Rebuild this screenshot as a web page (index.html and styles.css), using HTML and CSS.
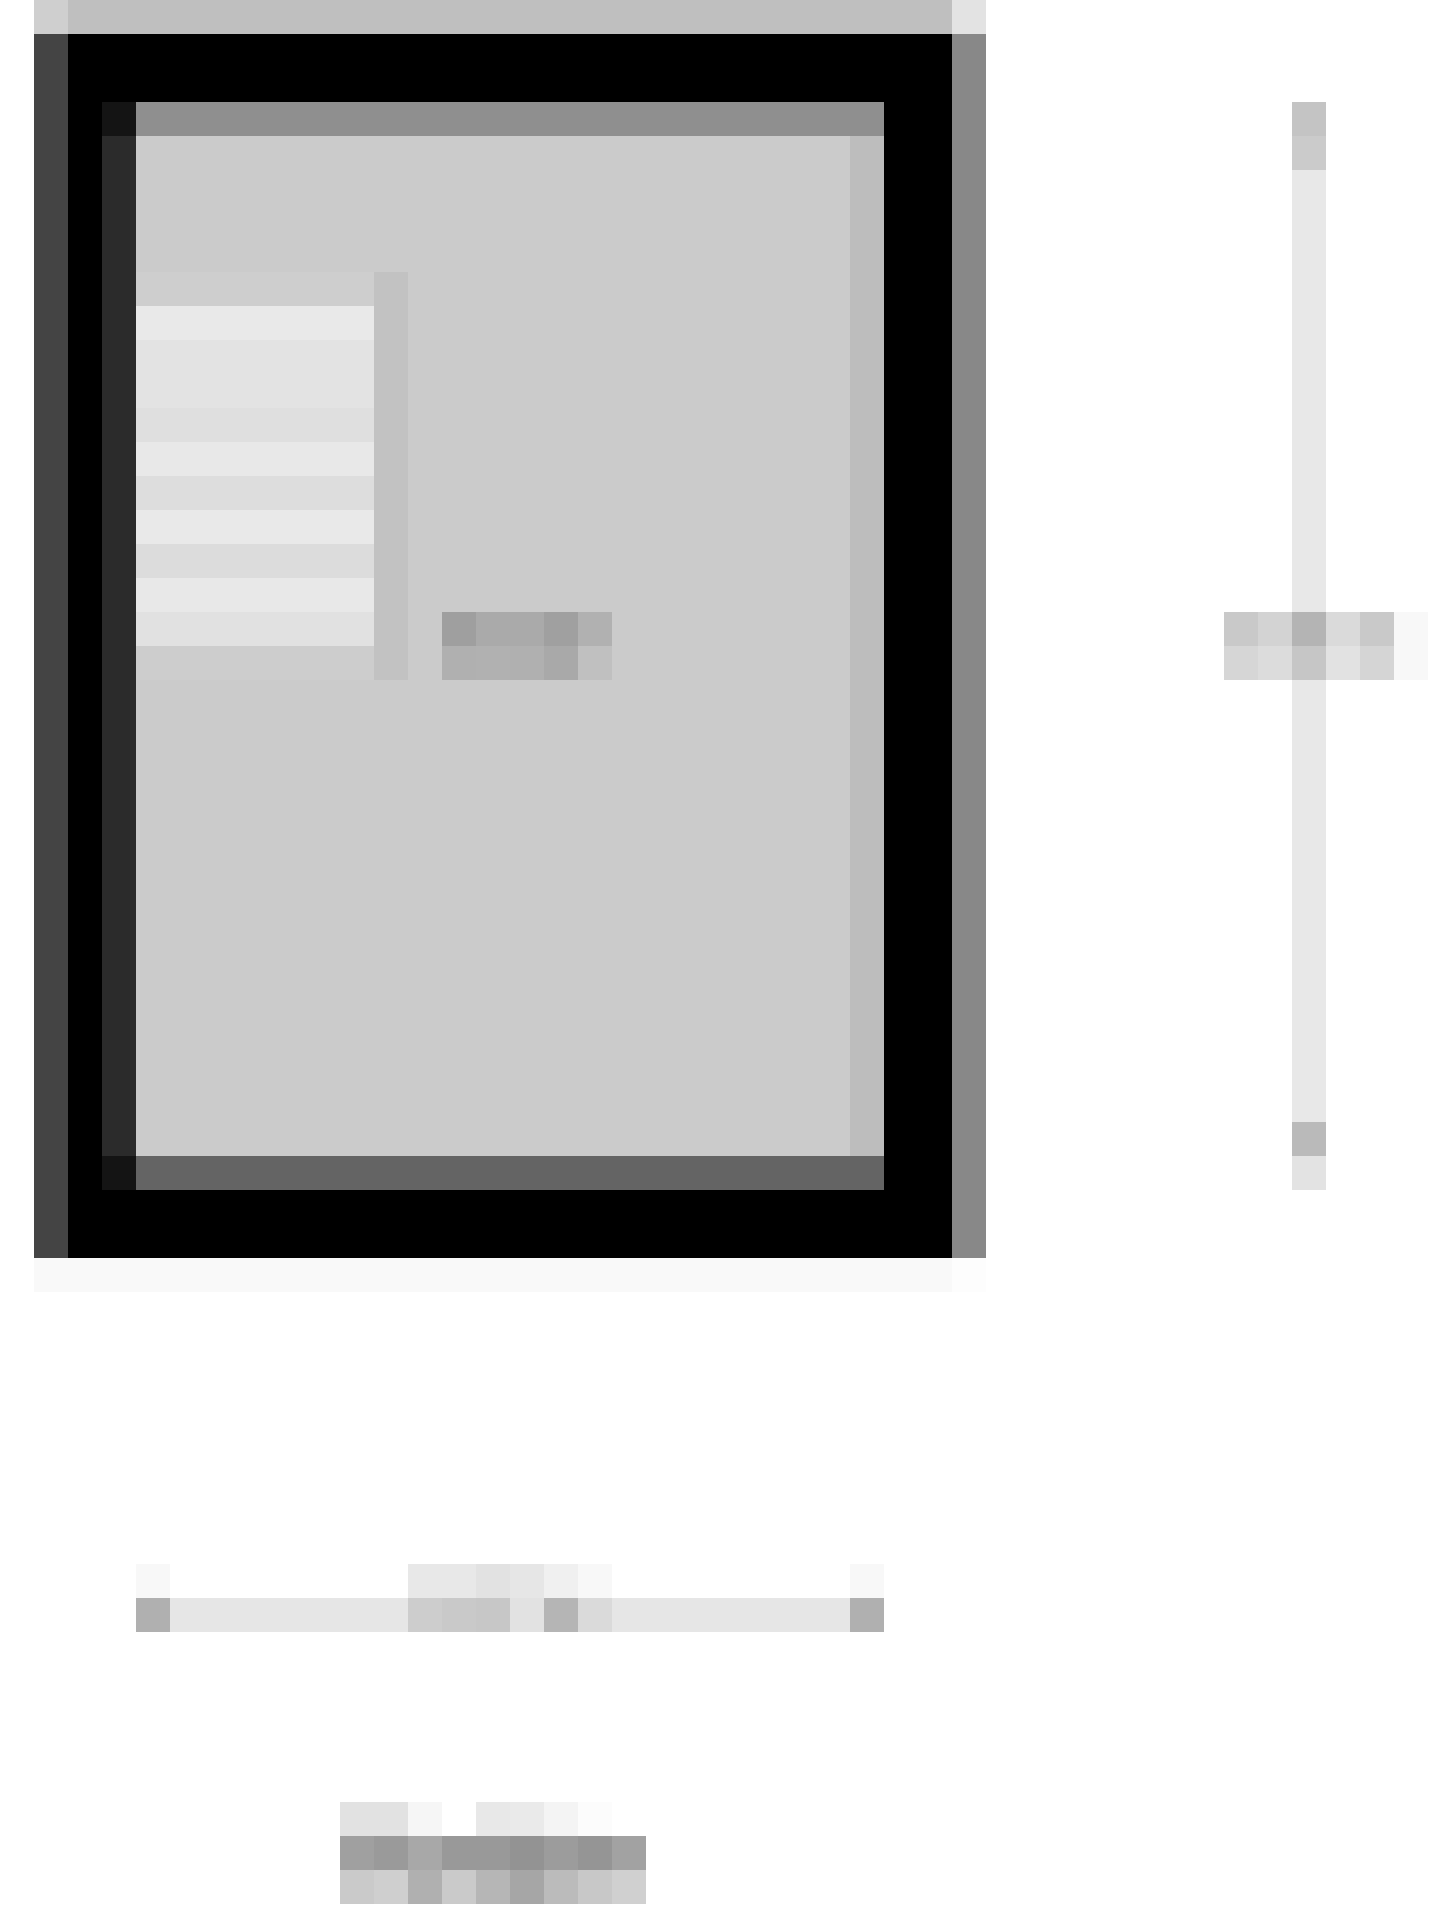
FILE: index.html
```html
<!DOCTYPE html>
<html lang="en">
<head>
<meta charset="utf-8">
<title>Preview</title>
<link rel="stylesheet" href="styles.css">
</head>
<body>
<div class="page">
  <div class="device">
    <div class="device-top">
      <span class="cap cap-l"></span>
      <span class="cap cap-m"></span>
      <span class="cap cap-r"></span>
    </div>
    <div class="device-body">
      <div class="side side-l"></div>
      <div class="bezel">
        <div class="screen">
          <div class="screen-edge">
            <span class="edge-corner"></span>
            <span class="edge-mid"></span>
            <span class="edge-corner"></span>
          </div>
          <div class="screen-main">
            <div class="screen-top"></div>
            <div class="screen-content">
              <div class="view">
                <ul class="list">
                  <li class="row r-edge"></li>
                  <li class="row r1"></li>
                  <li class="row r2"></li>
                  <li class="row r2"></li>
                  <li class="row r3"></li>
                  <li class="row r4"></li>
                  <li class="row r5"></li>
                  <li class="row r1"></li>
                  <li class="row r6"></li>
                  <li class="row r4"></li>
                  <li class="row r7"></li>
                  <li class="row r-edge2"></li>
                </ul>
                <div class="list-scroll"></div>
                <div class="view-label">
                  <span class="lbl lbl-a"></span>
                  <span class="lbl lbl-b"></span>
                </div>
              </div>
              <div class="view-scroll"></div>
            </div>
            <div class="screen-bottom"></div>
          </div>
        </div>
      </div>
      <div class="side side-r"></div>
    </div>
    <div class="device-shadow"></div>
  </div>

  <div class="vslider">
    <span class="vk vk-1"></span>
    <span class="vk vk-2"></span>
    <span class="vtrack"></span>
    <span class="vk vk-3"></span>
    <span class="vk vk-4"></span>
  </div>
  <div class="vlabel">
    <span class="lbl vl-a"></span>
    <span class="lbl vl-b"></span>
  </div>

  <div class="hslider">
    <span class="lbl hs-a"></span>
    <span class="lbl hs-b"></span>
  </div>

  <div class="caption">
    <span class="lbl cp-a"></span>
    <span class="lbl cp-b"></span>
    <span class="lbl cp-c"></span>
  </div>
</div>
</body>
</html>
```

FILE: styles.css
```css
html, body {
  margin: 0;
  padding: 0;
  background: #ffffff;
  font-family: "Liberation Sans", Arial, sans-serif;
}

.page {
  display: grid;
  grid-template-columns: repeat(42, 34px);
  grid-template-rows: repeat(56, 34px);
  width: 1440px;
  height: 1920px;
}

/* ---------- device frame ---------- */
.device {
  grid-column: 2 / 30;
  grid-row: 1 / 39;
  display: flex;
  flex-direction: column;
}

.device-top {
  display: flex;
  height: 34px;
}
.cap { display: block; height: 34px; }
.cap-l { width: 34px; background: #cfcfcf; }
.cap-m { flex: 1; background: #bfbfbf; }
.cap-r { width: 34px; background: #e3e3e3; }

.device-body {
  display: flex;
  height: 1224px;
}
.side { width: 34px; }
.side-l { background: #444444; }
.side-r { background: #888888; }

.bezel {
  flex: 1;
  background: #000000;
  padding: 68px 68px 68px 34px;
  display: flex;
}

.screen {
  flex: 1;
  display: flex;
}

.screen-edge {
  width: 34px;
  display: flex;
  flex-direction: column;
}
.edge-corner { height: 34px; background: #141414; }
.edge-mid { flex: 1; background: #2b2b2b; }

.screen-main {
  flex: 1;
  display: flex;
  flex-direction: column;
}
.screen-top { height: 34px; background: #8f8f8f; }
.screen-bottom { height: 34px; background: #646464; }

.screen-content {
  flex: 1;
  display: flex;
  background: #cbcbcb;
}
.view-scroll { width: 34px; background: #bdbdbd; }

.view {
  flex: 1;
  display: grid;
  grid-template-columns: repeat(21, 34px);
  grid-template-rows: repeat(30, 34px);
}

.list {
  grid-column: 1 / 8;
  grid-row: 5 / 17;
  margin: 0;
  padding: 0;
  list-style: none;
  display: flex;
  flex-direction: column;
}
.row { height: 34px; }
.r-edge { background: #cecece; }
.r-edge2 { background: #cdcdcd; }
.r1 { background: #e9e9e9; }
.r2 { background: #e3e3e3; }
.r3 { background: #dfdfdf; }
.r4 { background: #e8e8e8; }
.r5 { background: #dddddd; }
.r6 { background: #dcdcdc; }
.r7 { background: #e1e1e1; }

.list-scroll {
  grid-column: 8 / 9;
  grid-row: 5 / 17;
  background: #c2c2c2;
}

.view-label {
  grid-column: 10 / 15;
  grid-row: 15 / 17;
  display: flex;
  flex-direction: column;
}
.lbl { display: block; height: 34px; }
.lbl-a {
  background: linear-gradient(to right,
    #9f9f9f 0 34px, #aaaaaa 34px 102px, #a0a0a0 102px 136px, #b1b1b1 136px 170px);
}
.lbl-b {
  background: linear-gradient(to right,
    #b0b0b0 0 34px, #b1b1b1 34px 68px, #b0b0b0 68px 102px, #a9a9a9 102px 136px, #c0c0c0 136px 170px);
}

.device-shadow {
  height: 34px;
  background: linear-gradient(to right, #f9f9f9 0 918px, #fdfdfd 918px 952px);
}

/* ---------- vertical slider ---------- */
.vslider {
  grid-column: 39 / 40;
  grid-row: 4 / 36;
  display: flex;
  flex-direction: column;
}
.vk { display: block; height: 34px; }
.vk-1 { background: #c4c4c4; }
.vk-2 { background: #cbcbcb; }
.vk-3 { background: #bababa; }
.vk-4 { background: #e3e3e3; }
.vtrack { flex: 1; background: #e8e8e8; }

.vlabel {
  grid-column: 37 / 43;
  grid-row: 19 / 21;
  display: flex;
  flex-direction: column;
}
.vl-a {
  background: linear-gradient(to right,
    #c9c9c9 0 34px, #d3d3d3 34px 68px, #b4b4b4 68px 102px,
    #dadada 102px 136px, #c9c9c9 136px 170px, #f8f8f8 170px 204px);
}
.vl-b {
  background: linear-gradient(to right,
    #d6d6d6 0 34px, #dcdcdc 34px 68px, #c6c6c6 68px 102px,
    #e2e2e2 102px 136px, #d5d5d5 136px 170px, #f8f8f8 170px 204px);
}

/* ---------- horizontal slider ---------- */
.hslider {
  grid-column: 5 / 27;
  grid-row: 47 / 49;
  display: flex;
  flex-direction: column;
}
.hs-a {
  background: linear-gradient(to right,
    #f8f8f8 0 34px, #ffffff 34px 272px,
    #e8e8e8 272px 340px, #e2e2e2 340px 374px, #e6e6e6 374px 408px,
    #f0f0f0 408px 442px, #f8f8f8 442px 476px,
    #ffffff 476px 714px, #f8f8f8 714px 748px);
}
.hs-b {
  background: linear-gradient(to right,
    #b0b0b0 0 34px, #e6e6e6 34px 272px,
    #cdcdcd 272px 306px, #c9c9c9 306px 340px, #c7c7c7 340px 374px,
    #e2e2e2 374px 408px, #b5b5b5 408px 442px, #dadada 442px 476px,
    #e6e6e6 476px 714px, #b0b0b0 714px 748px);
}

/* ---------- caption ---------- */
.caption {
  grid-column: 11 / 20;
  grid-row: 54 / 57;
  display: flex;
  flex-direction: column;
}
.cp-a {
  background: linear-gradient(to right,
    #e2e2e2 0 68px, #f6f6f6 68px 102px, #ffffff 102px 136px,
    #e8e8e8 136px 170px, #eaeaea 170px 204px, #f4f4f4 204px 238px,
    #fcfcfc 238px 272px, #ffffff 272px 306px);
}
.cp-b {
  background: linear-gradient(to right,
    #a0a0a0 0 34px, #9a9a9a 34px 68px, #a8a8a8 68px 102px,
    #999999 102px 170px, #939393 170px 204px, #9c9c9c 204px 238px,
    #959595 238px 272px, #a2a2a2 272px 306px);
}
.cp-c {
  background: linear-gradient(to right,
    #cacaca 0 34px, #cfcfcf 34px 68px, #b0b0b0 68px 102px,
    #cacaca 102px 136px, #b6b6b6 136px 170px, #a6a6a6 170px 204px,
    #bbbbbb 204px 238px, #c8c8c8 238px 272px, #d0d0d0 272px 306px);
}
```
